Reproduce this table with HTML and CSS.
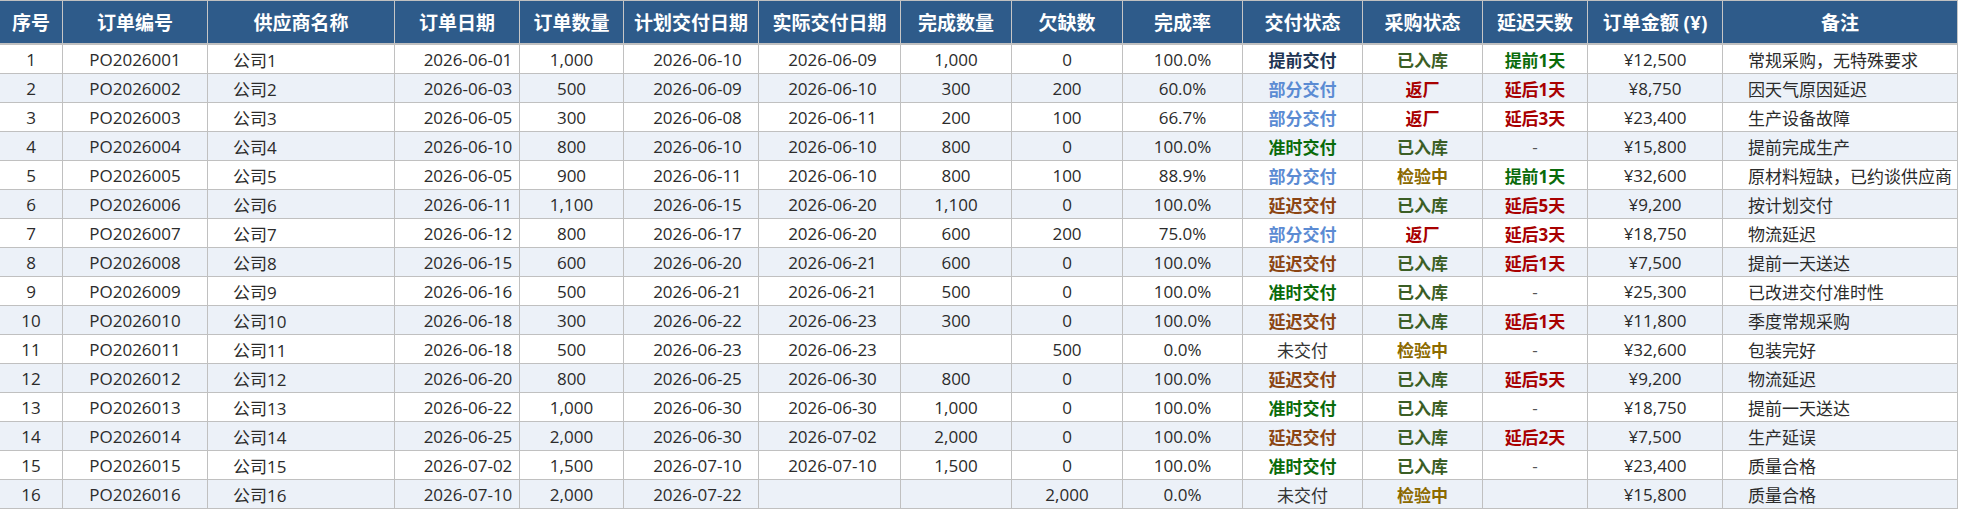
FILE: index.html
```html
<!DOCTYPE html>
<html lang="zh-CN">
<head>
<meta charset="utf-8">
<title>采购订单交付跟踪</title>
<link rel="stylesheet" href="styles.css">
</head>
<body>
<div class="tbl" role="table">
  <div class="hd">序号</div><div class="hd">订单编号</div><div class="hd">供应商名称</div><div class="hd">订单日期</div><div class="hd">订单数量</div><div class="hd">计划交付日期</div><div class="hd">实际交付日期</div><div class="hd">完成数量</div><div class="hd">欠缺数</div><div class="hd">完成率</div><div class="hd">交付状态</div><div class="hd">采购状态</div><div class="hd">延迟天数</div><div class="hd">订单金额 (¥)</div><div class="hd">备注</div>

  <div class="c">1</div><div class="c">PO2026001</div><div class="c l">公司1</div><div class="c d1">2026-06-01</div><div class="c">1,000</div><div class="c d2">2026-06-10</div><div class="c d3">2026-06-09</div><div class="c">1,000</div><div class="c">0</div><div class="c">100.0%</div><div class="c s-early">提前交付</div><div class="c p-in">已入库</div><div class="c g-early">提前1天</div><div class="c">¥12,500</div><div class="c l">常规采购，无特殊要求</div>

  <div class="c z">2</div><div class="c z">PO2026002</div><div class="c z l">公司2</div><div class="c z d1">2026-06-03</div><div class="c z">500</div><div class="c z d2">2026-06-09</div><div class="c z d3">2026-06-10</div><div class="c z">300</div><div class="c z">200</div><div class="c z">60.0%</div><div class="c z s-part">部分交付</div><div class="c z p-back">返厂</div><div class="c z g-late">延后1天</div><div class="c z">¥8,750</div><div class="c z l">因天气原因延迟</div>

  <div class="c">3</div><div class="c">PO2026003</div><div class="c l">公司3</div><div class="c d1">2026-06-05</div><div class="c">300</div><div class="c d2">2026-06-08</div><div class="c d3">2026-06-11</div><div class="c">200</div><div class="c">100</div><div class="c">66.7%</div><div class="c s-part">部分交付</div><div class="c p-back">返厂</div><div class="c g-late">延后3天</div><div class="c">¥23,400</div><div class="c l">生产设备故障</div>

  <div class="c z">4</div><div class="c z">PO2026004</div><div class="c z l">公司4</div><div class="c z d1">2026-06-10</div><div class="c z">800</div><div class="c z d2">2026-06-10</div><div class="c z d3">2026-06-10</div><div class="c z">800</div><div class="c z">0</div><div class="c z">100.0%</div><div class="c z s-ontime">准时交付</div><div class="c z p-in">已入库</div><div class="c z dash">-</div><div class="c z">¥15,800</div><div class="c z l">提前完成生产</div>

  <div class="c">5</div><div class="c">PO2026005</div><div class="c l">公司5</div><div class="c d1">2026-06-05</div><div class="c">900</div><div class="c d2">2026-06-11</div><div class="c d3">2026-06-10</div><div class="c">800</div><div class="c">100</div><div class="c">88.9%</div><div class="c s-part">部分交付</div><div class="c p-check">检验中</div><div class="c g-early">提前1天</div><div class="c">¥32,600</div><div class="c l">原材料短缺，已约谈供应商</div>

  <div class="c z">6</div><div class="c z">PO2026006</div><div class="c z l">公司6</div><div class="c z d1">2026-06-11</div><div class="c z">1,100</div><div class="c z d2">2026-06-15</div><div class="c z d3">2026-06-20</div><div class="c z">1,100</div><div class="c z">0</div><div class="c z">100.0%</div><div class="c z s-late">延迟交付</div><div class="c z p-in">已入库</div><div class="c z g-late">延后5天</div><div class="c z">¥9,200</div><div class="c z l">按计划交付</div>

  <div class="c">7</div><div class="c">PO2026007</div><div class="c l">公司7</div><div class="c d1">2026-06-12</div><div class="c">800</div><div class="c d2">2026-06-17</div><div class="c d3">2026-06-20</div><div class="c">600</div><div class="c">200</div><div class="c">75.0%</div><div class="c s-part">部分交付</div><div class="c p-back">返厂</div><div class="c g-late">延后3天</div><div class="c">¥18,750</div><div class="c l">物流延迟</div>

  <div class="c z">8</div><div class="c z">PO2026008</div><div class="c z l">公司8</div><div class="c z d1">2026-06-15</div><div class="c z">600</div><div class="c z d2">2026-06-20</div><div class="c z d3">2026-06-21</div><div class="c z">600</div><div class="c z">0</div><div class="c z">100.0%</div><div class="c z s-late">延迟交付</div><div class="c z p-in">已入库</div><div class="c z g-late">延后1天</div><div class="c z">¥7,500</div><div class="c z l">提前一天送达</div>

  <div class="c">9</div><div class="c">PO2026009</div><div class="c l">公司9</div><div class="c d1">2026-06-16</div><div class="c">500</div><div class="c d2">2026-06-21</div><div class="c d3">2026-06-21</div><div class="c">500</div><div class="c">0</div><div class="c">100.0%</div><div class="c s-ontime">准时交付</div><div class="c p-in">已入库</div><div class="c dash">-</div><div class="c">¥25,300</div><div class="c l">已改进交付准时性</div>

  <div class="c z">10</div><div class="c z">PO2026010</div><div class="c z l">公司10</div><div class="c z d1">2026-06-18</div><div class="c z">300</div><div class="c z d2">2026-06-22</div><div class="c z d3">2026-06-23</div><div class="c z">300</div><div class="c z">0</div><div class="c z">100.0%</div><div class="c z s-late">延迟交付</div><div class="c z p-in">已入库</div><div class="c z g-late">延后1天</div><div class="c z">¥11,800</div><div class="c z l">季度常规采购</div>

  <div class="c">11</div><div class="c">PO2026011</div><div class="c l">公司11</div><div class="c d1">2026-06-18</div><div class="c">500</div><div class="c d2">2026-06-23</div><div class="c d3">2026-06-23</div><div class="c"></div><div class="c">500</div><div class="c">0.0%</div><div class="c s-none">未交付</div><div class="c p-check">检验中</div><div class="c dash">-</div><div class="c">¥32,600</div><div class="c l">包装完好</div>

  <div class="c z">12</div><div class="c z">PO2026012</div><div class="c z l">公司12</div><div class="c z d1">2026-06-20</div><div class="c z">800</div><div class="c z d2">2026-06-25</div><div class="c z d3">2026-06-30</div><div class="c z">800</div><div class="c z">0</div><div class="c z">100.0%</div><div class="c z s-late">延迟交付</div><div class="c z p-in">已入库</div><div class="c z g-late">延后5天</div><div class="c z">¥9,200</div><div class="c z l">物流延迟</div>

  <div class="c">13</div><div class="c">PO2026013</div><div class="c l">公司13</div><div class="c d1">2026-06-22</div><div class="c">1,000</div><div class="c d2">2026-06-30</div><div class="c d3">2026-06-30</div><div class="c">1,000</div><div class="c">0</div><div class="c">100.0%</div><div class="c s-ontime">准时交付</div><div class="c p-in">已入库</div><div class="c dash">-</div><div class="c">¥18,750</div><div class="c l">提前一天送达</div>

  <div class="c z">14</div><div class="c z">PO2026014</div><div class="c z l">公司14</div><div class="c z d1">2026-06-25</div><div class="c z">2,000</div><div class="c z d2">2026-06-30</div><div class="c z d3">2026-07-02</div><div class="c z">2,000</div><div class="c z">0</div><div class="c z">100.0%</div><div class="c z s-late">延迟交付</div><div class="c z p-in">已入库</div><div class="c z g-late">延后2天</div><div class="c z">¥7,500</div><div class="c z l">生产延误</div>

  <div class="c">15</div><div class="c">PO2026015</div><div class="c l">公司15</div><div class="c d1">2026-07-02</div><div class="c">1,500</div><div class="c d2">2026-07-10</div><div class="c d3">2026-07-10</div><div class="c">1,500</div><div class="c">0</div><div class="c">100.0%</div><div class="c s-ontime">准时交付</div><div class="c p-in">已入库</div><div class="c dash">-</div><div class="c">¥23,400</div><div class="c l">质量合格</div>

  <div class="c z">16</div><div class="c z">PO2026016</div><div class="c z l">公司16</div><div class="c z d1">2026-07-10</div><div class="c z">2,000</div><div class="c z d2">2026-07-22</div><div class="c z d3"></div><div class="c z"></div><div class="c z">2,000</div><div class="c z">0.0%</div><div class="c z s-none">未交付</div><div class="c z p-check">检验中</div><div class="c z"></div><div class="c z">¥15,800</div><div class="c z l">质量合格</div>
</div>
</body>
</html>
```

FILE: styles.css
```css
html, body {
  margin: 0;
  padding: 0;
  background: #ffffff;
}

body {
  font-family: "Open Sans", "Noto Sans CJK SC", "Noto Sans", sans-serif;
  color: #2b2b2b;
}

.tbl {
  display: grid;
  grid-template-columns: 63px 145px 187px 125px 104px 135px 142px 111px 111px 120px 120px 120px 105px 135px 235px;
  width: 1958px;
  border-top: 1px solid #c0c0c0;
}

.hd {
  box-sizing: border-box;
  height: 44px;
  background: #2e5b8a;
  color: #ffffff;
  font-weight: 700;
  font-size: 19px;
  display: flex;
  align-items: center;
  justify-content: center;
  border-right: 1px solid #c6c6c6;
  border-bottom: 2px solid #c0c0c0;
  white-space: nowrap;
}

.c {
  box-sizing: border-box;
  height: 29px;
  font-size: 17px;
  display: flex;
  align-items: center;
  justify-content: center;
  border-right: 1px solid #c0c0c0;
  border-bottom: 1px solid #c0c0c0;
  background: #ffffff;
  white-space: nowrap;
  padding-top: 1px;
}

.z {
  background: #ecf1f8;
}

.l {
  justify-content: flex-start;
  padding-left: 25px;
}

.d1 { padding-left: 22px; }
.d2 { padding-left: 13px; }
.d3 { padding-left: 6px; }

.s-early { color: #1e3554; font-weight: 700; }
.s-part { color: #5b8bd3; font-weight: 700; }
.s-ontime { color: #0a6b0a; font-weight: 700; }
.s-late { color: #8b4513; font-weight: 700; }
.s-none { color: #333333; }

.p-in { color: #3b5e25; font-weight: 700; }
.p-back { color: #a80000; font-weight: 700; }
.p-check { color: #8c6a00; font-weight: 700; }

.g-early { color: #0a6b0a; font-weight: 700; }
.g-late { color: #a80000; font-weight: 700; }

.dash { color: #555555; }
```
